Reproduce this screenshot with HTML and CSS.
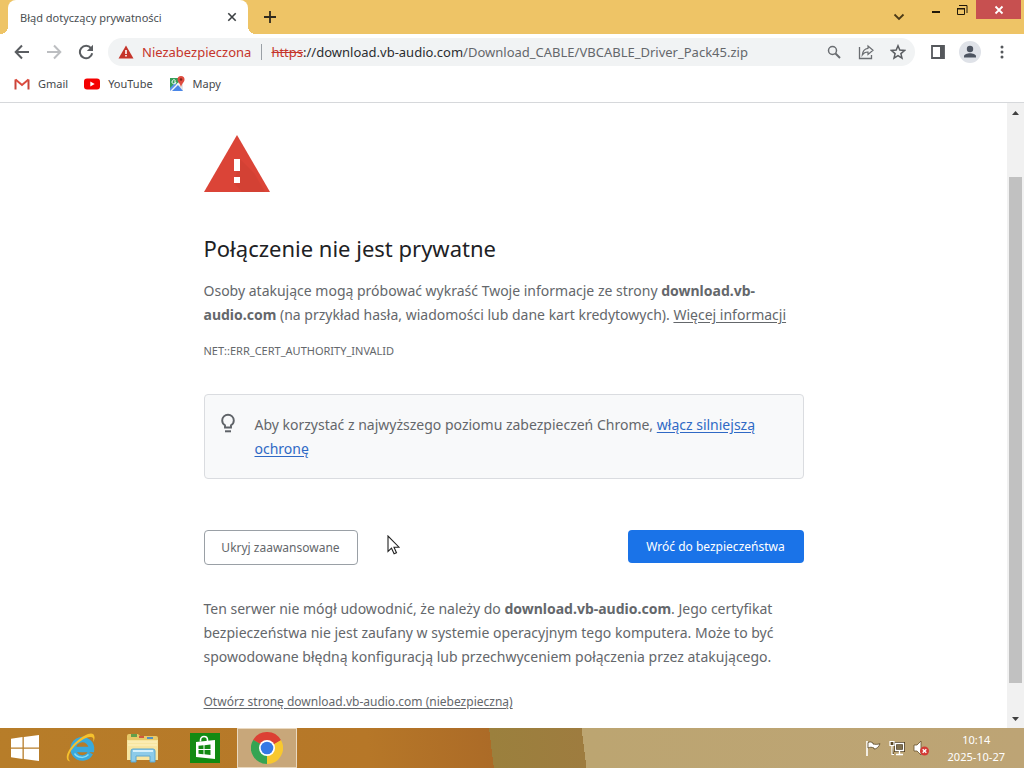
FILE: index.html
```html
<!DOCTYPE html>
<html lang="pl">
<head>
<meta charset="utf-8">
<title>Błąd dotyczący prywatności</title>
<link rel="stylesheet" href="styles.css">
</head>
<body>
<header class="browser">
  <div class="tab-strip">
    <div class="tab">
      <span class="tab-title">Błąd dotyczący prywatności</span>
      <button class="icon-button tab-close" aria-label="Zamknij kartę"><svg width="10" height="10" viewBox="0 0 10 10"><path d="M1.3 1.3l7.4 7.4M8.7 1.3L1.3 8.7" stroke="#3c4043" stroke-width="1.600"/></svg></button>
    </div>
    <button class="icon-button new-tab" aria-label="Nowa karta"><svg width="14" height="14" viewBox="0 0 14 14"><path d="M7 1v12M1 7h12" stroke="#2f2a1e" stroke-width="1.800"/></svg></button>
    <div class="window-controls">
      <button class="icon-button tab-search" aria-label="Wyszukaj karty"><svg width="12" height="8" viewBox="0 0 12 8"><path d="M1.5 1.5L6 6l4.500-4.500" fill="none" stroke="#4b3a17" stroke-width="1.800"/></svg></button>
      <button class="icon-button minimize" aria-label="Minimalizuj"><svg width="10" height="4" viewBox="0 0 10 4"><path d="M1 1h8v2H1z" fill="#20180a"/></svg></button>
      <button class="icon-button restore" aria-label="Przywróć"><svg width="12" height="12" viewBox="0 0 12 12"><path d="M3 1.500h8V9" fill="none" stroke="#20180a"/><path d="M1.500 4.500h7v6h-7z" fill="none" stroke="#20180a"/><path d="M1 4h8v1.500H1z" fill="#20180a"/></svg></button>
      <button class="icon-button close" aria-label="Zamknij"><svg width="10" height="10" viewBox="0 0 10 10"><path d="M1.500 1.500l7 7M8.500 1.500l-7 7" stroke="#fff" stroke-width="1.800"/></svg></button>
    </div>
  </div>
  <div class="toolbar">
    <button class="icon-button" aria-label="Wstecz"><svg width="16" height="16" viewBox="0 0 16 16"><path d="M15 8H2M8 1.500L1.700 8 8 14.500" fill="none" stroke="#5a5d61" stroke-width="2"/></svg></button>
    <button class="icon-button" aria-label="Dalej"><svg width="16" height="16" viewBox="0 0 16 16"><path d="M1 8h13M8 1.500L14.300 8 8 14.500" fill="none" stroke="#bcbec1" stroke-width="2"/></svg></button>
    <button class="icon-button" aria-label="Odśwież"><svg width="16" height="16" viewBox="0 0 16 16"><path d="M13 4.200A6.200 6.200 0 1 0 14.200 9.300" fill="none" stroke="#5a5d61" stroke-width="2"/><path d="M15 .8V7H8.800z" fill="#5a5d61"/></svg></button>
    <div class="omnibox">
      <svg class="warn" width="16" height="14" viewBox="0 0 16 14"><path d="M8 .5L15.500 13.500H.5z" fill="#c5352b"/><path d="M7.200 5h1.600v4H7.200zM7.200 10h1.600v1.600H7.200z" fill="#fff"/></svg>
      <span class="insecure">Niezabezpieczona</span>
      <span class="url"><s>https</s><b>://download.vb-audio.com</b>/Download_CABLE/VBCABLE_Driver_Pack45.zip</span>
      <button class="icon-button" aria-label="Powiększenie"><svg width="16" height="16" viewBox="0 0 16 16"><circle cx="6.500" cy="6.500" r="4" fill="none" stroke="#6a6d71" stroke-width="1.500"/><path d="M9.500 9.500l4.500 4.500" stroke="#6a6d71" stroke-width="2"/></svg></button>
      <button class="icon-button" aria-label="Udostępnij"><svg width="16" height="16" viewBox="0 0 16 16"><path d="M1.500 3v11.500h12V11" fill="none" stroke="#6a6d71" stroke-width="1.300"/><path d="M10 2l5 4.200-5 4.200V8C7.500 7.800 5.800 8.800 4.300 11 4.600 7.500 6.300 4.800 10 4.300z" fill="none" stroke="#6a6d71" stroke-width="1.200"/></svg></button>
      <button class="icon-button" aria-label="Dodaj do zakładek"><svg width="16" height="16" viewBox="0 0 16 16"><path d="M8 1.800l1.800 4.300 4.700.4-3.600 3.100 1.100 4.600-4-2.500-4 2.500 1.100-4.600L1.500 6.500l4.700-.4z" fill="none" stroke="#5a5d61" stroke-width="1.500"/></svg></button>
    </div>
    <button class="icon-button" aria-label="Panel boczny"><svg width="14" height="14" viewBox="0 0 14 14"><path d="M1 1h12v12H1z" fill="#fff" stroke="#55585c" stroke-width="1.800"/><path d="M9 1h4v12H9z" fill="#55585c"/></svg></button>
    <button class="icon-button" aria-label="Profil"><svg width="22" height="22" viewBox="0 0 22 22"><circle cx="11" cy="11" r="11" fill="#dfe2e8"/><circle cx="11" cy="8" r="3.200" fill="#4d5461"/><path d="M5 16.500v-1.200c0-2 3.500-3 6-3s6 1 6 3v1.200z" fill="#4d5461"/></svg></button>
    <button class="icon-button" aria-label="Menu"><svg width="4" height="14" viewBox="0 0 4 14"><g fill="#55585c"><circle cx="2" cy="2" r="1.500"/><circle cx="2" cy="7" r="1.500"/><circle cx="2" cy="12" r="1.500"/></g></svg></button>
  </div>
  <nav class="bookmarks">
    <a href="#"><svg width="16" height="16" viewBox="0 0 16 16"><path d="M1.500 13.500V3.500" stroke="#c8453b" stroke-width="2"/><path d="M14.500 13.500V3.500" stroke="#c8453b" stroke-width="2"/><path d="M1.500 3.500L8 9l6.500-5.500" fill="none" stroke="#dc4a3d" stroke-width="2"/></svg>Gmail</a>
    <a href="#"><svg width="16" height="16" viewBox="0 0 16 16"><rect x="0" y="2.500" width="16" height="11" rx="3" fill="#f40000"/><path d="M6.300 5.500v5L10.700 8z" fill="#fff"/></svg>YouTube</a>
    <a href="#"><svg width="16" height="16" viewBox="0 0 16 16"><path d="M1 2h13v13H1z" fill="#e6e6e6"/><path d="M1 2h9v4l-9 7z" fill="#35a05a"/><path d="M1 15L9 7l2 2-6 6z" fill="#f6f6f6"/><path d="M3 15l6-6 5 6z" fill="#4a86e8"/><path d="M1 12l5-5 1.500 1.500L1 15z" fill="#5b93ea"/><path d="M6.500 4.500A2 2 0 1 0 7 6H5" fill="none" stroke="#fff"/><path d="M12 0a3.500 3.500 0 0 0-3.500 3.500C8.500 6 11 7 12 11c1-4 3.500-5 3.500-7.500A3.500 3.500 0 0 0 12 0z" fill="#df4b3e"/><circle cx="12" cy="3.500" r="1.200" fill="#80241e"/></svg>Mapy</a>
  </nav>
</header>
<div class="viewport">
  <main class="page">
    <article class="interstitial">
      <svg width="66" height="57" viewBox="0 0 66 57"><path d="M33 0l33 57H0z" fill="#db4437"/><path d="M36 24l14 14 11 19H38L30 48z" fill="#c63d31" opacity=".35"/><path d="M30 24h6v12h-6zM30 42h6v6h-6z" fill="#fff"/></svg>
      <h1>Połączenie nie jest prywatne</h1>
      <p>Osoby atakujące mogą próbować wykraść Twoje informacje ze strony <strong>download.vb-audio.com</strong> (na przykład hasła, wiadomości lub dane kart kredytowych). <a href="#">Więcej informacji</a></p>
      <p class="error-code">NET::ERR_CERT_AUTHORITY_INVALID</p>
      <section class="promo">
        <svg width="20" height="20" viewBox="0 0 20 20"><path d="M7 14.500h6v-2.200c1.700-1 2.800-2.800 2.800-4.800a5.800 5.800 0 1 0-11.600 0c0 2 1.100 3.800 2.800 4.800z" fill="none" stroke="#5f6368" stroke-width="1.900"/><path d="M7 18.300h6" stroke="#5f6368" stroke-width="2"/></svg>
        <p>Aby korzystać z najwyższego poziomu zabezpieczeń Chrome, <a href="#">włącz silniejszą ochronę</a></p>
      </section>
      <div class="actions">
        <button class="secondary">Ukryj zaawansowane</button>
        <button class="primary">Wróć do bezpieczeństwa</button>
      </div>
      <p>Ten serwer nie mógł udowodnić, że należy do <strong>download.vb-audio.com</strong>. Jego certyfikat bezpieczeństwa nie jest zaufany w systemie operacyjnym tego komputera. Może to być spowodowane błędną konfiguracją lub przechwyceniem połączenia przez atakującego.</p>
      <p class="proceed"><a href="#">Otwórz stronę download.vb-audio.com (niebezpieczną)</a></p>
    </article>
  </main>
  <div class="scrollbar">
    <svg width="7" height="4" viewBox="0 0 7 4"><path d="M0 4l3.500-4L7 4z" fill="#404040"/></svg>
    <div class="track"><div class="thumb"></div></div>
    <svg width="7" height="4" viewBox="0 0 7 4"><path d="M0 0l3.500 4L7 0z" fill="#404040"/></svg>
  </div>
</div>
<footer class="taskbar">
  <button class="task" aria-label="Start"><svg width="28" height="26" viewBox="0 0 28 26"><path d="M0 3.700l11.500-1.600v10.400H0zM12.800 1.900L28 0v12.500H12.800zM0 13.700h11.500v10.200L0 22.300zM12.800 13.700H28V26l-15.200-1.900z" fill="#fff"/></svg></button>
  <button class="task" aria-label="Internet Explorer"><svg width="32" height="32" viewBox="0 0 32 32"><path d="M25.500 21A9.200 9.200 0 1 1 26.500 17.500H10" fill="none" stroke="#3aa9dc" stroke-width="5.500"/><path d="M23.500 22.500a9 9 0 0 1-14-1" fill="none" stroke="#86dcf5" stroke-width="1.500"/><path d="M5.500 29.500C-1 29 1 19 11 10S29-1 29.500 5c.2 2-.5 3.500-1.500 5 1-3.500.3-5.500-3-5C20 5.500 13 10 8.500 15.500 3 22 2 27 5.500 29.500z" fill="#f6c12c"/></svg></button>
  <button class="task" aria-label="Eksplorator plików"><svg width="34" height="32" viewBox="0 0 34 32"><path d="M1 4q0-2 2-2h9l2 2h16q2 0 2 2v22H1z" fill="#e7c968"/><path d="M5 2h6v3H5z" fill="#61a04b"/><path d="M13 4h5v2h-5z" fill="#cf5a3f"/><path d="M21 5h6v2h-6z" fill="#5590bd"/><path d="M1 8h31v20H1z" fill="#f7e5a0"/><path d="M2 10h29M2 13h29" stroke="#fff3c4"/><path d="M5 30V19q0-2 2-2h20q2 0 2 2v11h-5v-6H10v6z" fill="#8ccbe9" stroke="#5ca7cf"/><path d="M7 19h20" stroke="#d5f1fc" stroke-width="2"/></svg></button>
  <button class="task" aria-label="Sklep"><svg width="30" height="30" viewBox="0 0 30 30"><path d="M0 0h30v30H0z" fill="#128a12"/><path d="M6 9l19-2v19L6 24z" fill="#fff"/><path d="M10.500 8.500V7c0-2 1.500-3.500 3.500-3.500S17.500 5 17.500 7v1" fill="none" stroke="#fff" stroke-width="1.600"/><path d="M8.500 12.800l5-.5v3.700h-5zM14.500 12.200l6-.6V16h-6zM8.500 17h5v4.200l-5-.5zM14.500 17h6v5l-6-.7z" fill="#128a12"/></svg></button>
  <button class="task active" aria-label="Google Chrome"><svg width="32" height="32" viewBox="0 0 32 32"><path d="M16 16L2.140 8A16 16 0 0 1 29.860 8z" fill="#dc4034"/><path d="M16 16L29.860 8A16 16 0 0 1 16 32z" fill="#f8c82f"/><path d="M16 16v16A16 16 0 0 1 2.140 8z" fill="#35a452"/><path d="M16 8h13.860L16 16z" fill="#dc4034"/><path d="M9.070 20L2.140 8 16 16z" fill="#35a452"/><path d="M22.930 20L16 32V16z" fill="#f8c82f"/><circle cx="16" cy="16" r="8" fill="#fff"/><circle cx="16" cy="16" r="6.300" fill="#3478e5"/></svg></button>
  <div class="tray">
    <svg width="16" height="16" viewBox="0 0 16 16"><path d="M2 1v15" stroke="#fff" stroke-width="1.600"/><path d="M3 2.500c2-1 3.500-.5 5 .5v1c2 .3 4 .7 7-.3-1 3-3.500 5.500-6 5.300V8C6.500 7 5 7 3 8z" fill="#fff" stroke="#584626" stroke-width=".8"/></svg>
    <svg width="16" height="16" viewBox="0 0 16 16"><path d="M6.500 3.500h8v7h-8z" fill="#80704f" stroke="#4f3e20" stroke-width="3"/><path d="M6.500 3.500h8v7h-8zM10.500 11v3M7 14.500h7" fill="none" stroke="#fff" stroke-width="1.300"/><path d="M1 1.500h4v4H1zM3 5.500v9h2" fill="#594724" stroke="#fff" stroke-width="1.200"/></svg>
    <svg width="16" height="16" viewBox="0 0 16 16"><path d="M1 5h3l4-4v14l-4-4H1z" fill="#fff" stroke="#67512c" stroke-width=".8"/><circle cx="11.500" cy="11" r="4.500" fill="#d33b35"/><path d="M9.700 9.200l3.600 3.600M13.300 9.200l-3.600 3.600" stroke="#fff" stroke-width="1.400"/></svg>
  </div>
  <time class="clock"><span>10:14</span><span>2025-10-27</span></time>
</footer>
<svg class="cursor" width="13" height="20" viewBox="0 0 13 20"><path d="M1 1v15.500l3.500-3.300 2.600 5.600 2.400-1.100-2.500-5.500H12z" fill="#fff" stroke="#222" stroke-width="1.100"/></svg>
</body>
</html>
```
FILE: styles.css
```css
* { box-sizing: border-box; }
body {
  margin: 0;
  height: 100vh;
  display: flex;
  flex-direction: column;
  overflow: hidden;
  background: #fff;
  font-family: "Noto Sans", "Open Sans", sans-serif;
  font-size: 14px;
  color: #64676b;
}
button { font: inherit; cursor: default; }
svg { display: block; flex: none; }
.icon-button {
  display: flex;
  align-items: center;
  justify-content: center;
  flex: none;
  padding: 0;
  border: 0;
  background: none;
  width: 32px;
  height: 28px;
}
.browser { border-bottom: 1px solid #d6d8db; }
.tab-strip {
  display: flex;
  height: 34px;
  padding-left: 8px;
  background: #eec466;
}
.tab {
  position: relative;
  display: flex;
  align-items: center;
  justify-content: space-between;
  width: 240px;
  padding: 0 8px 0 12px;
  background: #fff;
  border-radius: 8px 8px 0 0;
}
.tab::before, .tab::after {
  content: "";
  position: absolute;
  bottom: 0;
  width: 8px;
  height: 8px;
}
.tab::before { right: 100%; background: radial-gradient(circle at 0 0, #eec466 8px, #fff 8px); }
.tab::after { left: 100%; background: radial-gradient(circle at 100% 0, #eec466 8px, #fff 8px); }
.tab-title { font-size: 11px; color: #4b4f53; }
.tab-close { width: 16px; height: 16px; }
.new-tab { width: 28px; height: 34px; margin-left: 8px; }
.window-controls { display: flex; margin-left: auto; padding-right: 3px; }
.tab-search { height: 34px; margin-right: 9px; }
.minimize { width: 24px; height: 24px; }
.restore { width: 28px; height: 19px; }
.close { width: 45px; height: 19px; background: #c75050; }
.toolbar {
  display: flex;
  align-items: center;
  padding: 4px 6px;
}
.omnibox {
  display: flex;
  align-items: center;
  flex: 1;
  min-width: 0;
  height: 28px;
  margin: 0 7px 0 6px;
  padding: 0 1px 0 10px;
  border-radius: 14px;
  background: #f1f3f4;
  font-size: 13px;
  white-space: nowrap;
}
.insecure {
  margin-left: 8px;
  padding-right: 10px;
  border-right: 1px solid #9aa0a6;
  line-height: 16px;
  color: #c5352b;
}
.url { flex: 1; min-width: 0; margin-left: 9px; overflow: hidden; }
.url s { color: #c5352b; }
.url b { font-weight: 400; color: #2b2d30; }
.bookmarks {
  display: flex;
  gap: 16px;
  height: 32px;
  align-items: flex-start;
  padding: 6px 14px 0;
}
.bookmarks a {
  display: flex;
  align-items: center;
  gap: 8px;
  font-size: 11px;
  line-height: 16px;
  color: #44474b;
  text-decoration: none;
}
.viewport { flex: 1; min-height: 0; display: flex; }
.page { flex: 1; overflow: hidden; }
.interstitial {
  max-width: 600px;
  margin: 0 auto;
  padding-top: 32px;
  line-height: 24px;
}
h1 {
  margin: 40px 0 15px;
  font-size: 22px;
  font-weight: 400;
  line-height: 32px;
  color: #202124;
}
p { margin: 0; }
.interstitial a { color: inherit; text-underline-offset: 2px; }
.error-code { margin-top: 12px; font-size: 11px; }
.promo {
  display: flex;
  gap: 17px;
  margin: 31px 0 51px;
  padding: 18px 13px 17px;
  border: 1px solid #dadce0;
  border-radius: 4px;
  background: #f8f9fa;
}
.interstitial .promo a { color: #2f69c5; }
.actions {
  display: flex;
  justify-content: space-between;
  align-items: flex-start;
  margin-bottom: 32px;
}
.actions button {
  padding: 8px 16px;
  border: 0;
  border-radius: 4px;
  font-size: 12px;
  line-height: 17px;
}
.actions .secondary { min-width: 154px; border: 1px solid #9aa0a6; background: #fff; color: #64676b; }
.actions .primary { min-width: 176px; background: #1a73e8; color: #fff; }
.proceed { margin-top: 21px; font-size: 12px; }
.scrollbar {
  display: flex;
  flex-direction: column;
  align-items: center;
  width: 17px;
  padding: 8px 2px 7px;
  background: #f1f1f1;
}
.track { flex: 1; width: 100%; padding: 62px 0 34px; }
.thumb { height: 100%; background: #c1c1c1; }
.taskbar {
  display: flex;
  align-items: center;
  height: 40px;
  background:
    linear-gradient(83deg, #b77d29 0%, #b67728 36%, #ac6b27 48%, #9b803d 48%, #9e7c3f 57%, #bca571 57%, #bda475 100%);
}
.task {
  display: flex;
  align-items: center;
  justify-content: center;
  width: 60px;
  height: 40px;
  margin-right: 2px;
  padding: 0;
  border: 0;
  background: none;
}
.task:first-child { width: 50px; margin-right: 1px; }
.task.active { border: 1px solid #ead9c0; background: #c8a77a; }
.tray { display: flex; gap: 8px; margin-left: auto; }
.clock {
  display: flex;
  flex-direction: column;
  align-items: center;
  margin: 0 19px;
  font-size: 11px;
  line-height: 17px;
  color: #fff;
}
.cursor { position: absolute; left: 387px; top: 535px; }
```
